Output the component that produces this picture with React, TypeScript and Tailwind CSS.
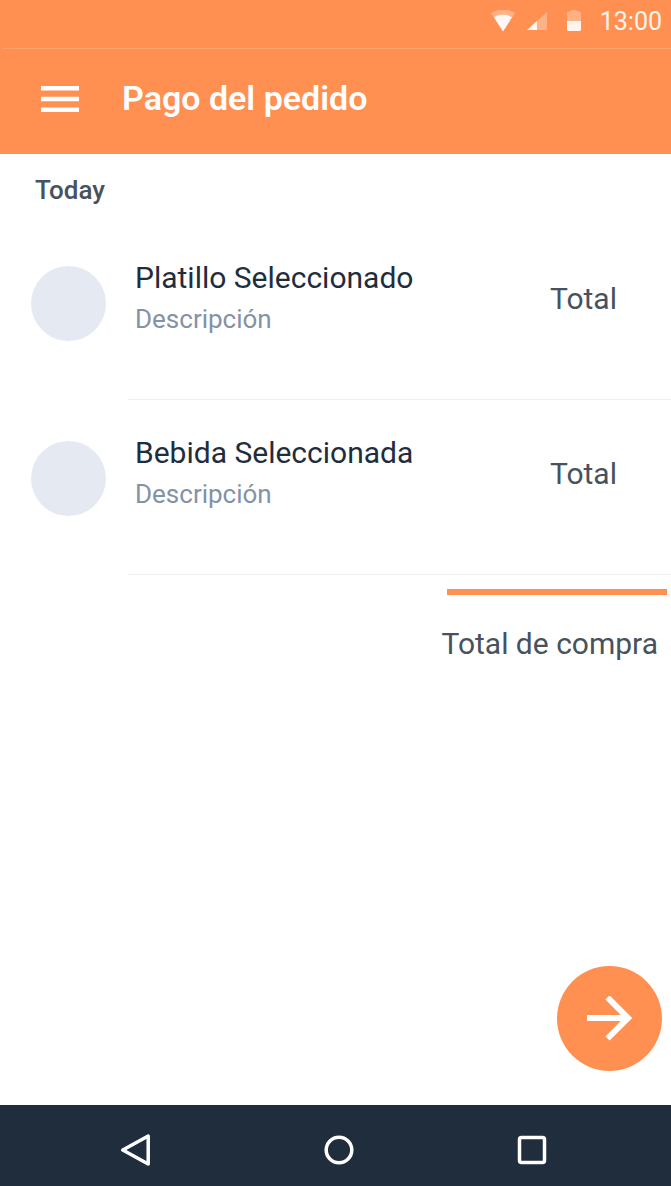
type Item = { name: string; detail: string; total: string };

const items: Item[] = [
  { name: "Platillo Seleccionado", detail: "Descripción", total: "Total" },
  { name: "Bebida Seleccionada", detail: "Descripción", total: "Total" },
];

function StatusBar() {
  return (
    <div className="flex h-12 items-center justify-end pr-[9px] pb-1">
      <svg className="mr-3 h-6 w-6" viewBox="0 0 24 24" fill="#fff" aria-hidden="true">
        <path fillOpacity=".3" d="M0 3.200C3.300.7 7.500-.4 12-.4s8.700 1.100 12 3.600L12 21.500Z" />
        <path fillOpacity=".9" d="M3 7.200C5.600 5.500 8.700 4.800 12 4.800s6.400.7 9 2.400L12 21.500Z" />
      </svg>
      <svg className="mr-5 h-6 w-5" viewBox="0 0 20 24" fill="#fff" aria-hidden="true">
        <path fillOpacity=".3" d="M20 2v18H0Z" />
        <path fillOpacity=".9" d="M10 11v9H0Z" />
      </svg>
      <svg className="mr-[19px] h-6 w-3.5" viewBox="0 0 14 24" fill="#fff" aria-hidden="true">
        <path fillOpacity=".3" d="M0 11V3q0-1.500 1.500-1.500H3.500Q4 0 5 0h4q1 0 1.500 1.500h2Q14 1.500 14 3v8Z" />
        <path fillOpacity=".9" d="M0 11h14v8.500q0 1.500-1.500 1.500h-11Q0 21 0 19.500Z" />
      </svg>
      <span className="text-[25px] leading-8 text-white/90">13:00</span>
    </div>
  );
}

function OrderRow({ name, detail, total }: Item) {
  return (
    <li className="flex h-[175px] pl-[31px]">
      <div className="mt-[41px] h-[75px] w-[75px] shrink-0 rounded-full bg-[#e5e9f2]" />
      <div className="ml-[22px] flex flex-1 justify-between border-b border-[#eeeff2] pt-[35px] pr-[54px] pl-[7px]">
        <div>
          <h3 className="text-[30px] leading-9 text-[#1f2d3d]">{name}</h3>
          <p className="mt-[7px] text-[26px] leading-8 text-[#8492a6]">{detail}</p>
        </div>
        <p className="mt-[21px] text-[30px] leading-9 text-[#47525e]">{total}</p>
      </div>
    </li>
  );
}

export default function App() {
  return (
    <div className="flex min-h-screen flex-col bg-white font-['Roboto',sans-serif]">
      <header className="bg-[#ff9052]">
        <StatusBar />
        <div className="ml-[3px] border-t border-[#ffa26e]" />
        <div className="flex h-[105px] items-center pb-1.5 pl-[41px]">
          <button type="button" aria-label="Menú">
            <svg className="block h-[26px] w-[38px]" viewBox="0 0 38 26" fill="#fff" aria-hidden="true">
              <path d="M0 0h38v4.500H0ZM0 10.800h38v4.400H0ZM0 21.500h38V26H0Z" />
            </svg>
          </button>
          <h1 className="ml-[43px] pb-0.5 text-[34px] leading-10 font-semibold text-white">Pago del pedido</h1>
        </div>
      </header>

      <main className="flex flex-1 flex-col">
        <h2 className="pt-5 pl-[35px] text-[26px] leading-8 font-medium text-[#47525e]">Today</h2>
        <ul className="mt-[19px]">
          {items.map((item) => (
            <OrderRow key={item.name} {...item} />
          ))}
        </ul>
        <div className="mt-3.5 mr-1 h-1.5 w-[220px] self-end bg-[#ff9052]" />
        <p className="mt-[31px] mr-[13px] self-end text-[30px] leading-9 text-[#47525e]">Total de compra</p>
        <button
          type="button"
          aria-label="Continuar"
          className="mt-auto mr-[9px] mb-[34px] flex h-[105px] w-[105px] items-center justify-center self-end rounded-full bg-[#ff9052]"
        >
          <svg className="h-[46px] w-[46px]" viewBox="0 0 46 46" fill="none" stroke="#fff" strokeWidth="6" aria-hidden="true">
            <path d="M0 22h39M20.500 1.500L41 22 20.500 42.500" />
          </svg>
        </button>
      </main>

      <nav className="flex h-[81px] items-center justify-between bg-[#1f2d3d] pt-2 pr-[123px] pl-[120px]">
        <button type="button" aria-label="Atrás">
          <svg className="block h-8 w-[42px]" viewBox="0 0 42 32" fill="none" stroke="#fff" strokeWidth="3.500" strokeLinejoin="round" aria-hidden="true">
            <path d="M28.200 2v28L2.800 16Z" />
          </svg>
        </button>
        <button type="button" aria-label="Inicio">
          <svg className="block h-8 w-8" viewBox="0 0 32 32" fill="none" stroke="#fff" strokeWidth="3.500" aria-hidden="true">
            <circle cx="16" cy="16" r="12.800" />
          </svg>
        </button>
        <button type="button" aria-label="Recientes">
          <svg className="block h-8 w-8" viewBox="0 0 32 32" fill="none" stroke="#fff" strokeWidth="3.500" aria-hidden="true">
            <rect x="3.500" y="3.500" width="25" height="25" rx="2" />
          </svg>
        </button>
      </nav>
    </div>
  );
}
